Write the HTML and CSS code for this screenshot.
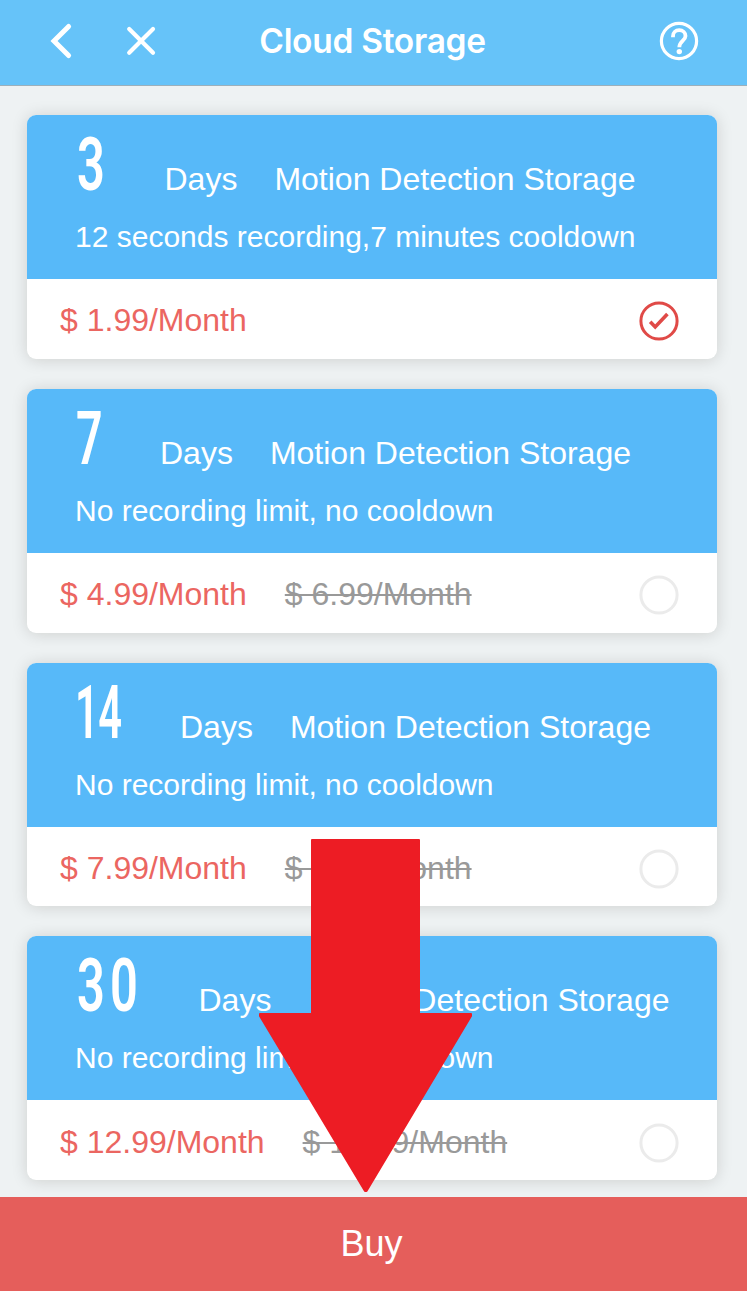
FILE: index.html
```
<!DOCTYPE html>
<html lang="en">
<head>
<meta charset="utf-8">
<title>Cloud Storage</title>
<link rel="stylesheet" href="styles.css">
</head>
<body>
<div class="app">
  <header class="navbar">
    <div class="nav-left">
      <svg class="icon-back" width="26" height="40" viewBox="0 0 26 40" fill="none" stroke="#fff" stroke-width="5" stroke-linecap="round" stroke-linejoin="miter"><path d="M20.6 5.4 6 20 20.6 34.6"/></svg>
      <svg class="icon-close" width="32" height="32" viewBox="0 0 32 32" fill="none" stroke="#fff" stroke-width="4.2" stroke-linecap="round"><path d="M3.2 3 27 26.8M27 3 3.2 26.8"/></svg>
    </div>
    <h1 class="title">Cloud Storage</h1>
    <svg class="icon-help" width="40" height="40" viewBox="0 0 40 40" fill="none" stroke="#fff"><circle cx="20" cy="20" r="17.6" stroke-width="3.2"/><path d="M14 16.2V15.2C14 11.4 16.6 9.2 20.2 9.2C23.8 9.2 26.5 11.7 26.5 15C26.5 19.4 20.3 20 20.3 26.2" stroke-width="3.8"/><circle cx="20.3" cy="30.6" r="2.7" fill="#fff" stroke="none"/></svg>
  </header>

  <main class="plans">
    <section class="card">
      <div class="card-head">
        <div class="line"><span class="num w-3"><b>3</b></span><span class="days">Days</span><span>Motion Detection Storage</span></div>
        <p class="desc">12 seconds recording,7 minutes cooldown</p>
      </div>
      <div class="card-foot"><span class="price">$ 1.99/Month</span>
        <svg class="radio" width="40" height="40" viewBox="0 0 40 40" fill="none" stroke="#e04a47"><circle cx="20" cy="20" r="18.1" stroke-width="3"/><path d="M11.2 20.8 16.2 26 28.4 13" stroke-width="3.6"/></svg>
      </div>
    </section>
    <section class="card">
      <div class="card-head">
        <div class="line"><span class="num w-7"><b>7</b></span><span class="days">Days</span><span>Motion Detection Storage</span></div>
        <p class="desc">No recording limit, no cooldown</p>
      </div>
      <div class="card-foot"><span class="price">$ 4.99/Month</span><s class="old">$ 6.99/Month</s>
        <svg class="radio" width="40" height="40" viewBox="0 0 40 40" fill="none" stroke="#ebebeb"><circle cx="20" cy="20" r="18.1" stroke-width="3"/></svg>
      </div>
    </section>
    <section class="card">
      <div class="card-head">
        <div class="line"><span class="num w-14"><b>14</b></span><span class="days">Days</span><span>Motion Detection Storage</span></div>
        <p class="desc">No recording limit, no cooldown</p>
      </div>
      <div class="card-foot"><span class="price">$ 7.99/Month</span><s class="old">$ 9.99/Month</s>
        <svg class="radio" width="40" height="40" viewBox="0 0 40 40" fill="none" stroke="#ebebeb"><circle cx="20" cy="20" r="18.1" stroke-width="3"/></svg>
      </div>
    </section>
    <section class="card">
      <div class="card-head">
        <div class="line"><span class="num w-30"><b>30</b></span><span class="days">Days</span><span>Motion Detection Storage</span></div>
        <p class="desc">No recording limit, no cooldown</p>
      </div>
      <div class="card-foot"><span class="price">$ 12.99/Month</span><s class="old">$ 15.99/Month</s>
        <svg class="radio" width="40" height="40" viewBox="0 0 40 40" fill="none" stroke="#ebebeb"><circle cx="20" cy="20" r="18.1" stroke-width="3"/></svg>
      </div>
    </section>
  </main>

  <footer class="buy">Buy</footer>
  <svg class="arrow" width="214" height="354" viewBox="0 0 214 354" fill="#ed1c24" stroke="#ed1c24" stroke-width="2" stroke-linejoin="round"><path d="M53 1H160V175H212V177L107.5 352H106L1 177V175H53Z"/></svg>
</div>
</body>
</html>
```
FILE: styles.css
```
* { box-sizing: border-box; }
body {
  margin: 0;
  background: #eef2f3;
  font-family: "Liberation Sans", Arial, sans-serif;
}
.app {
  position: relative;
  display: flex;
  flex-direction: column;
  width: 747px;
  height: 1291px;
  overflow: hidden;
}
.navbar {
  flex: none;
  display: grid;
  grid-template-columns: 1fr auto 1fr;
  align-items: center;
  height: 86px;
  padding: 0 48px 3px 48px;
  background: #66c3f9;
  border-bottom: 1px solid #9cb0bb;
}
.nav-left { display: flex; align-items: center; gap: 52px; }
.icon-back { display: block; }
.icon-close { display: block; margin-top: 2px; }
.title {
  margin: 0 2px 0 0;
  color: #fff;
  font: 600 33.5px/40px Inter, sans-serif;
  letter-spacing: -0.3px;
}
.icon-help { justify-self: end; }
.plans {
  flex: 1;
  min-height: 0;
  padding: 29px 30px 0 27px;
}
.card {
  height: 243.8px;
  margin-bottom: 30px;
  border-radius: 9px;
  background: #fff;
  box-shadow: 0 1px 16px rgba(30, 20, 0, 0.15);
}
.card-head {
  height: 164px;
  padding: 4px 48px 0;
  border-radius: 9px 9px 0 0;
  background: #57b9f9;
  color: #fff;
}
.line {
  display: flex;
  align-items: baseline;
  height: 99px;
  font-size: 32px;
  line-height: 90px;
  white-space: nowrap;
}
.num { flex: none; padding-left: 2px; }
.num b {
  display: inline-block;
  font: 600 75px/90px Roboto, sans-serif;
  letter-spacing: 8px;
  transform: scaleX(0.65);
  transform-origin: 0 0;
}
.w-3 { width: 89.5px; }
.w-7 { width: 85px; padding-left: 1px; }
.w-14 { width: 105px; padding-left: 0; }
.w-30 { width: 123.5px; }
.w-14 b { letter-spacing: -1px; transform: scaleX(0.555); }
.w-7 b { transform: scaleX(0.62); }
.days { margin-right: 37px; }
.desc {
  margin: 0;
  font-size: 30px;
  line-height: 38px;
  white-space: nowrap;
}
.card-foot {
  display: flex;
  align-items: center;
  height: 79.8px;
  padding: 5px 38px 0 33px;
  font-size: 32px;
}
.price { margin-right: 38px; color: #eb6661; }
.old { color: #999; text-decoration-thickness: 2px; }
.price, .old { margin-top: -2px; line-height: 40px; }
.radio { margin-left: auto; }
.buy {
  flex: none;
  height: 94px;
  padding-right: 4px;
  background: #e55e5b;
  color: #fff;
  font-size: 36px;
  line-height: 93px;
  text-align: center;
}
/* Pointer annotation over the plan list */
.arrow { position: absolute; left: 259px; top: 839px; }
```
